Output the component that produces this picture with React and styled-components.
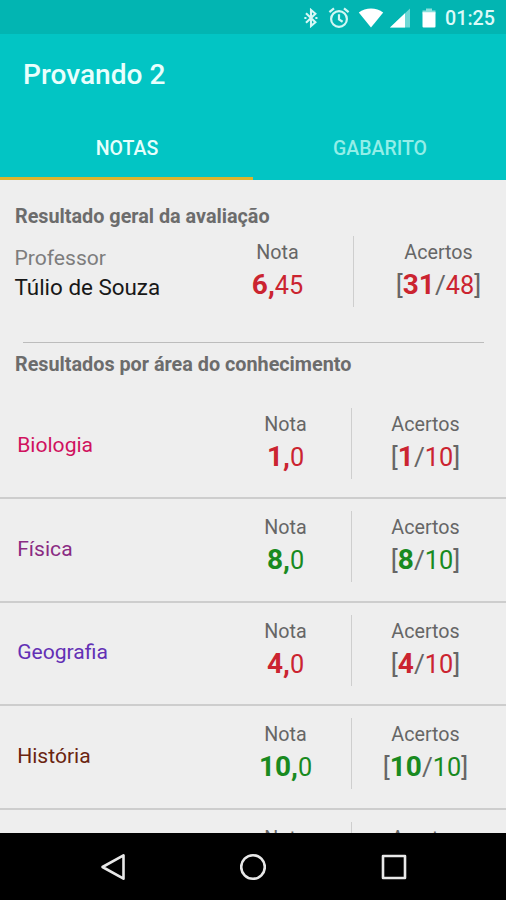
import React from 'react';
import styled, { createGlobalStyle } from 'styled-components';

const GlobalStyle = createGlobalStyle`
  * { box-sizing: border-box; }
  body { margin: 0; background: #eeeeee; font-family: Roboto, sans-serif; }
`;

const Screen = styled.div`
  width: 506px;
  height: 900px;
  display: flex;
  flex-direction: column;
  overflow: hidden;
  background: #eeeeee;
`;

const StatusBar = styled.div`
  flex: none;
  height: 34px;
  display: flex;
  align-items: center;
  justify-content: flex-end;
  padding: 2px 11px 0 0;
  background: #02b5b2;
`;

const StatusIcon = styled.svg`
  flex: none;
  display: block;
  margin-right: ${({ $gap }) => $gap}px;
`;

const Clock = styled.span`
  padding-top: 1px;
  font-size: 19.7px;
  line-height: 28px;
  font-weight: 500;
  color: #dcfaf8;
`;

const AppBar = styled.header`
  flex: none;
  height: 146px;
  display: flex;
  flex-direction: column;
  background: #02c5c4;
  color: #e9fffd;
`;

const Title = styled.h1`
  margin: 0;
  padding: 22px 0 0 23px;
  font-size: 28.1px;
  line-height: 38px;
  font-weight: 500;
`;

const Tabs = styled.nav`
  flex: 1;
  display: grid;
  grid-template-columns: 253px 253px;
`;

const Tab = styled.div`
  padding: 41px 0 0 1px;
  text-align: center;
  font-size: 19.5px;
  line-height: 28px;
  font-weight: 500;
  color: ${({ $active }) => ($active ? '#e6fffc' : '#93eee8')};
  border-bottom: 3px solid ${({ $active }) => ($active ? '#dcb52c' : 'transparent')};
`;

const Content = styled.main`
  flex: 1;
  min-height: 0;
  overflow: hidden;
  color: #666666;
`;

const SectionTitle = styled.h2`
  margin: 0;
  padding: ${({ $top }) => $top}px 0 0 15px;
  font-size: 19.8px;
  line-height: 28px;
  font-weight: 700;
  color: #6c6c6c;
`;

const Summary = styled.section`
  display: grid;
  grid-template-columns: 202px 151px 1px 135px;
  height: 111px;
`;

const Teacher = styled.div`
  padding: 12px 0 0 14.5px;
`;

const Role = styled.div`
  font-size: 21.1px;
  line-height: 30px;
  color: #7d7d7d;
`;

const TeacherName = styled.div`
  font-size: 22.4px;
  line-height: 29px;
  color: #181818;
`;

const Rule = styled.div`
  height: 1px;
  margin: 0 22px 0 23px;
  background: #bcbcbc;
`;

const List = styled.div`
  padding-top: 16.7px;
`;

const Subject = styled.section`
  display: grid;
  grid-template-columns: 220px 131px 1px 147px;
  height: 103.6px;
  border-bottom: 2px solid #cdcdcd;
`;

const SubjectName = styled.div`
  padding: 35.3px 0 0 17.2px;
  font-size: 21.1px;
  line-height: 28px;
  color: ${({ $color }) => $color};
`;

const Divider = styled.div`
  height: 71px;
  margin-top: ${({ $top }) => $top}px;
  background: #cecece;
`;

const Metric = styled.div`
  padding: ${({ $top }) => $top}px 0 0 ${({ $left = 0 }) => $left}px;
  display: flex;
  flex-direction: column;
  align-items: center;
`;

const MetricLabel = styled.div`
  font-size: 19.7px;
  line-height: 28px;
`;

const MetricValue = styled.div`
  font-size: 26.4px;
  line-height: 36px;
  white-space: nowrap;
`;

const Tint = styled.span`
  font-size: 25.3px;
  color: ${({ $pass }) => ($pass ? '#198a20' : '#cb2430')};
`;

const Strong = styled(Tint)`
  font-size: 28px;
  font-weight: 700;
`;

const NavBar = styled.footer`
  flex: none;
  height: 67px;
  display: grid;
  grid-template-columns: 26px 26px 26px;
  column-gap: 114.5px;
  justify-content: center;
  align-items: center;
  background: #000000;
`;

const NavIcon = styled.svg`
  display: block;
  fill: none;
  stroke: #e8e8e8;
  stroke-width: 2.6;
  stroke-linejoin: round;
`;

const subjects = [
  { name: 'Biologia', color: '#d0125f', whole: '1', hits: '1', pass: false },
  { name: 'Física', color: '#8a2b83', whole: '8', hits: '8', pass: true },
  { name: 'Geografia', color: '#6330b5', whole: '4', hits: '4', pass: false },
  { name: 'História', color: '#6a2410', whole: '10', hits: '10', pass: true },
];

function Grade({ whole, decimal, pass, top, left }) {
  return (
    <Metric $top={top} $left={left}>
      <MetricLabel>Nota</MetricLabel>
      <MetricValue>
        <Strong $pass={pass}>{whole},</Strong>
        <Tint $pass={pass}>{decimal}</Tint>
      </MetricValue>
    </Metric>
  );
}

function Hits({ hits, total, pass, top, left }) {
  return (
    <Metric $top={top} $left={left}>
      <MetricLabel>Acertos</MetricLabel>
      <MetricValue>
        [<Strong $pass={pass}>{hits}</Strong>/<Tint $pass={pass}>{total}</Tint>]
      </MetricValue>
    </Metric>
  );
}

function SubjectList() {
  return (
    <List>
      {subjects.map((s) => (
        <Subject key={s.name}>
          <SubjectName $color={s.color}>{s.name}</SubjectName>
          <Grade whole={s.whole} decimal="0" pass={s.pass} top={15} />
          <Divider $top={12} />
          <Hits hits={s.hits} total="10" pass={s.pass} top={15} />
        </Subject>
      ))}
      <Subject>
        <span />
        <Metric $top={15}>
          <MetricLabel>Nota</MetricLabel>
        </Metric>
        <Divider $top={12} />
        <Metric $top={15}>
          <MetricLabel>Acertos</MetricLabel>
        </Metric>
      </Subject>
    </List>
  );
}

function StatusIcons() {
  return (
    <>
      <StatusIcon $gap={10} width="14" height="20" viewBox="0 0 14 20" fill="none" stroke="#d8f8f6" strokeWidth="2.1">
        <path d="M2 5.2 11.4 14.2 7 18V2l4.4 3.8L2 14.8" />
        <path d="M1.4 9v2M12.4 9v2" />
      </StatusIcon>
      <StatusIcon $gap={8} width="22" height="22" viewBox="0 0 22 22" fill="none" stroke="#d2f7f4" strokeWidth="2.2">
        <circle cx="11" cy="12" r="7.9" />
        <path d="M11 7.3v5.2l3.6 2.3M1.4 5.2 6 1.4M20.6 5.2 16 1.4" />
      </StatusIcon>
      <StatusIcon $gap={5} width="26" height="20" viewBox="0 0 26 20" fill="#ffffff">
        <path d="M.8 4.6C4.3 1.9 8.5.5 13 .5s8.7 1.4 12.2 4.1L13 19.6Z" />
      </StatusIcon>
      <StatusIcon $gap={10} width="22" height="20" viewBox="0 0 22 20">
        <path d="M21 .5V19.5H1Z" fill="#6fd8d5" />
        <path d="M16 5.2V19.5H1Z" fill="#ffffff" />
      </StatusIcon>
      <StatusIcon $gap={8} width="16" height="20" viewBox="0 0 16 20">
        <path d="M5 .5h6v2h3.5v3h-13v-3H5Z" fill="#8be0dc" />
        <path d="M1.5 4.3h13v14.2a1 1 0 0 1-1 1h-11a1 1 0 0 1-1-1Z" fill="#ffffff" />
      </StatusIcon>
    </>
  );
}

export default function App() {
  return (
    <>
      <GlobalStyle />
      <Screen>
        <StatusBar>
          <StatusIcons />
          <Clock>01:25</Clock>
        </StatusBar>
        <AppBar>
          <Title>Provando 2</Title>
          <Tabs>
            <Tab $active>NOTAS</Tab>
            <Tab>GABARITO</Tab>
          </Tabs>
        </AppBar>
        <Content>
          <SectionTitle $top={23}>Resultado geral da avaliação</SectionTitle>
          <Summary>
            <Teacher>
              <Role>Professor</Role>
              <TeacherName>Túlio de Souza</TeacherName>
            </Teacher>
            <Grade whole="6" decimal="45" pass={false} top={8} />
            <Divider $top={5} />
            <Hits hits="31" total="48" pass={false} top={8} left={34} />
          </Summary>
          <Rule />
          <SectionTitle $top={8}>Resultados por área do conhecimento</SectionTitle>
          <SubjectList />
        </Content>
        <NavBar>
          <NavIcon width="26" height="28" viewBox="0 0 26 28">
            <path d="M23.5 2.3V25.7L2.5 14Z" />
          </NavIcon>
          <NavIcon width="26" height="28" viewBox="0 0 26 28">
            <circle cx="13" cy="14" r="11.8" />
          </NavIcon>
          <NavIcon width="26" height="28" viewBox="0 0 26 28">
            <rect x="2" y="3" width="22" height="22" />
          </NavIcon>
        </NavBar>
      </Screen>
    </>
  );
}
